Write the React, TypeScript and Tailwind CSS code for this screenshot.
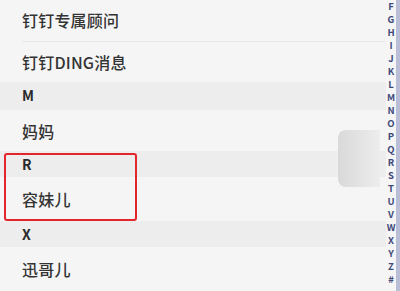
import React from 'react';

const indexLetters = ['F', 'G', 'H', 'I', 'J', 'K', 'L', 'M', 'N', 'O', 'P', 'Q', 'R', 'S', 'T', 'U', 'V', 'W', 'X', 'Y', 'Z', '#'];

const Row: React.FC<{ name: string; h: string }> = ({ name, h }) => (
    <div className={`flex items-center pl-[22px] bg-[#f5f5f5] ${h}`}>
        <span className="text-[16px] font-medium text-[#333] tracking-[0.2px]">{name}</span>
    </div>
);

const Header: React.FC<{ letter: string; h: string }> = ({ letter, h }) => (
    <div className={`flex items-center pl-[22px] bg-[#ededed] ${h}`}>
        <span className="text-[14px] font-bold text-[#2a2a2a]">{letter}</span>
    </div>
);

export default function App() {
    return (
        <div
            className="relative w-[400px] h-[291px] overflow-hidden bg-[#f5f5f5] flex"
            style={{ fontFamily: '"Noto Sans CJK SC", "Noto Sans", sans-serif' }}
        >
            {/* left edge */}
            <div className="w-[2px] bg-[#a9adbf] shrink-0" />
            <div className="w-[2px] bg-[#dcdde3] shrink-0" />

            {/* contact list */}
            <div className="flex-1 flex flex-col -ml-[4px]">
                <Row name="钉钉专属顾问" h="h-[41px]" />
                <div className="h-px bg-[#f5f5f5] pl-[22px]">
                    <div className="h-px bg-[#e8e8e8]" />
                </div>
                <Row name="钉钉DING消息" h="h-[40px]" />
                <Header letter="M" h="h-[28px]" />
                <Row name="妈妈" h="h-[42px]" />
                <Header letter="R" h="h-[26px]" />
                <Row name="容妹儿" h="h-[44px]" />
                <Header letter="X" h="h-[26px]" />
                <Row name="迅哥儿" h="h-[44px]" />
            </div>

            {/* index bar */}
            <div className="w-[10px] shrink-0 flex flex-col items-center -mt-[0.5px]">
                {indexLetters.map((l) => (
                    <span key={l} className="text-[9.5px] font-bold leading-[13.05px] text-[#3f4a7c]">
                        {l}
                    </span>
                ))}
            </div>
            <div className="w-[4px] shrink-0 bg-[#b9bdd6]" />

            {/* floating gray tab */}
            <div className="absolute left-[338px] top-[130px] w-[42px] h-[57px] rounded-l-[8px] bg-gradient-to-r from-[#d9d9d9] to-[#ededed]" />

            {/* red highlight */}
            <div className="absolute left-[4px] top-[153px] w-[133px] h-[68px] border-2 border-[#e3262b] rounded-[3px]" />
        </div>
    );
}
